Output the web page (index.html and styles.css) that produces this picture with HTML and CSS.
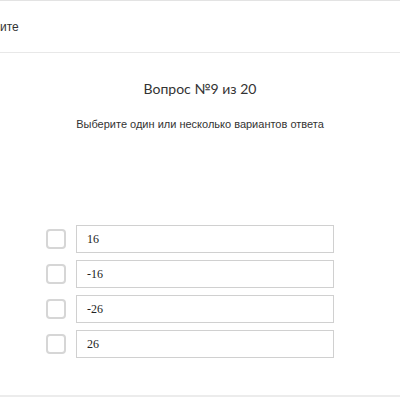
FILE: index.html
```html
<!DOCTYPE html>
<html>
<head>
  <title>Тест</title>
  <link rel="stylesheet" href="styles.css">
</head>
<body>

  <!-- Header -->
  <div class="header">
    <span class="header-link">ите</span>
  </div>

  <!-- Question -->
  <div class="question">
    <h2 class="title">Вопрос №9 из 20</h2>
    <p class="hint">Выберите один или несколько вариантов ответа</p>

    <div class="answers">
      <label class="answer">
        <span class="check"></span>
        <span class="field">16</span>
      </label>
      <label class="answer">
        <span class="check"></span>
        <span class="field">-16</span>
      </label>
      <label class="answer">
        <span class="check"></span>
        <span class="field">-26</span>
      </label>
      <label class="answer">
        <span class="check"></span>
        <span class="field">26</span>
      </label>
    </div>
  </div>

</body>
</html>
```

FILE: styles.css
```css
body {
  margin: 0;
  font-family: "Liberation Sans", Arial, sans-serif;
  color: #333;
  background: #fff;
  height: 400px;
  overflow: hidden;
}

.header {
  height: 51px;
  border-top: 1px solid #e3e3e3;
  border-bottom: 1px solid #e8e8e8;
  display: flex;
  align-items: center;
  font-size: 12px;
}

.header-link {
  color: #333;
}

.question {
  height: 342px;
  border-bottom: 2px solid #ececec;
  text-align: center;
}

.title {
  margin: 0;
  padding-top: 26px;
  font-family: Lato, sans-serif;
  font-size: 14px;
  font-weight: 400;
  line-height: 19px;
}

.hint {
  margin: 18px 0 0;
  font-size: 11px;
  line-height: 16px;
}

.answers {
  margin-top: 93px;
  padding-left: 46px;
  display: flex;
  flex-direction: column;
  gap: 7px;
}

.answer {
  display: flex;
  align-items: center;
  gap: 10px;
  cursor: pointer;
}

.check {
  width: 16px;
  height: 16px;
  border: 2px solid #d6d6d6;
  border-radius: 4px;
}

.field {
  width: 236px;
  height: 26px;
  border: 1px solid #d0d0d0;
  padding: 0 10px;
  text-align: left;
  font-family: "Liberation Serif", serif;
  font-size: 12px;
  line-height: 26px;
  color: #222;
}
```
